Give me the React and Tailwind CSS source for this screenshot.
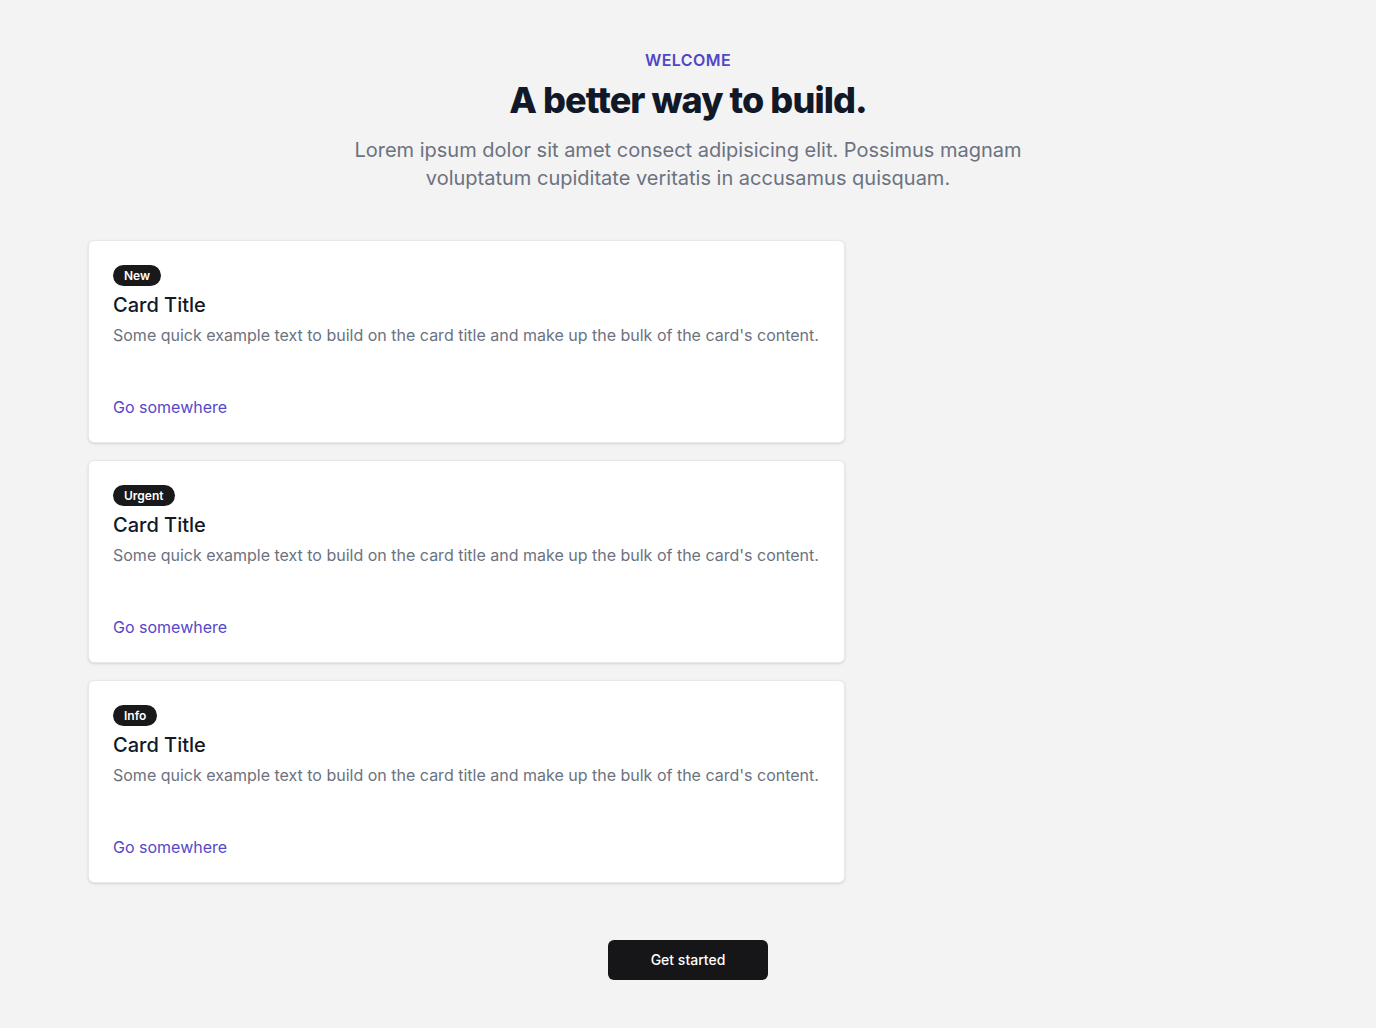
const cards = [
  { badge: 'New' },
  { badge: 'Urgent' },
  { badge: 'Info' },
];

const Card = ({ badge }) => (
  <div className="bg-white border border-[#e8e8ea] rounded-md shadow-sm px-6 pt-6 pb-[23px]">
    <span className="w-fit flex items-center rounded-full bg-[#19191b] text-white text-xs font-semibold px-[11px] h-[21px]">
      {badge}
    </span>
    <h3 className="mt-[5px] text-xl leading-7 font-medium text-[#111827]">Card Title</h3>
    <p className="mt-1 text-base leading-6 text-[#6b7280]">
      Some quick example text to build on the card title and make up the bulk of the card's content.
    </p>
    <a href="#" className="block mt-12 text-base leading-6 text-[#5548c8]">
      Go somewhere
    </a>
  </div>
);

export default function App() {
  return (
    <div className="min-h-screen bg-[#f3f3f3] font-['Inter',sans-serif] pt-12 pb-12">
      <div className="text-center">
        <p className="text-base leading-6 font-semibold text-[#4f46c8] tracking-wide">WELCOME</p>
        <h1 className="mt-2 text-4xl leading-10 font-extrabold tracking-tight text-[#111827]">
          A better way to build.
        </h1>
        <p className="mt-4 mx-auto max-w-2xl text-xl leading-7 text-[#6b7280]">
          Lorem ipsum dolor sit amet consect adipisicing elit. Possimus magnam voluptatum cupiditate veritatis in accusamus quisquam.
        </p>
      </div>
      <div className="mt-12 pl-[88px]">
        <div className="w-[757px] flex flex-col gap-[17px]">
          {cards.map((c) => (
            <Card key={c.badge} badge={c.badge} />
          ))}
        </div>
      </div>
      <div className="mt-[57px] flex justify-center">
        <button className="w-40 h-10 rounded-md bg-[#161618] text-white text-sm font-medium">
          Get started
        </button>
      </div>
    </div>
  );
}
